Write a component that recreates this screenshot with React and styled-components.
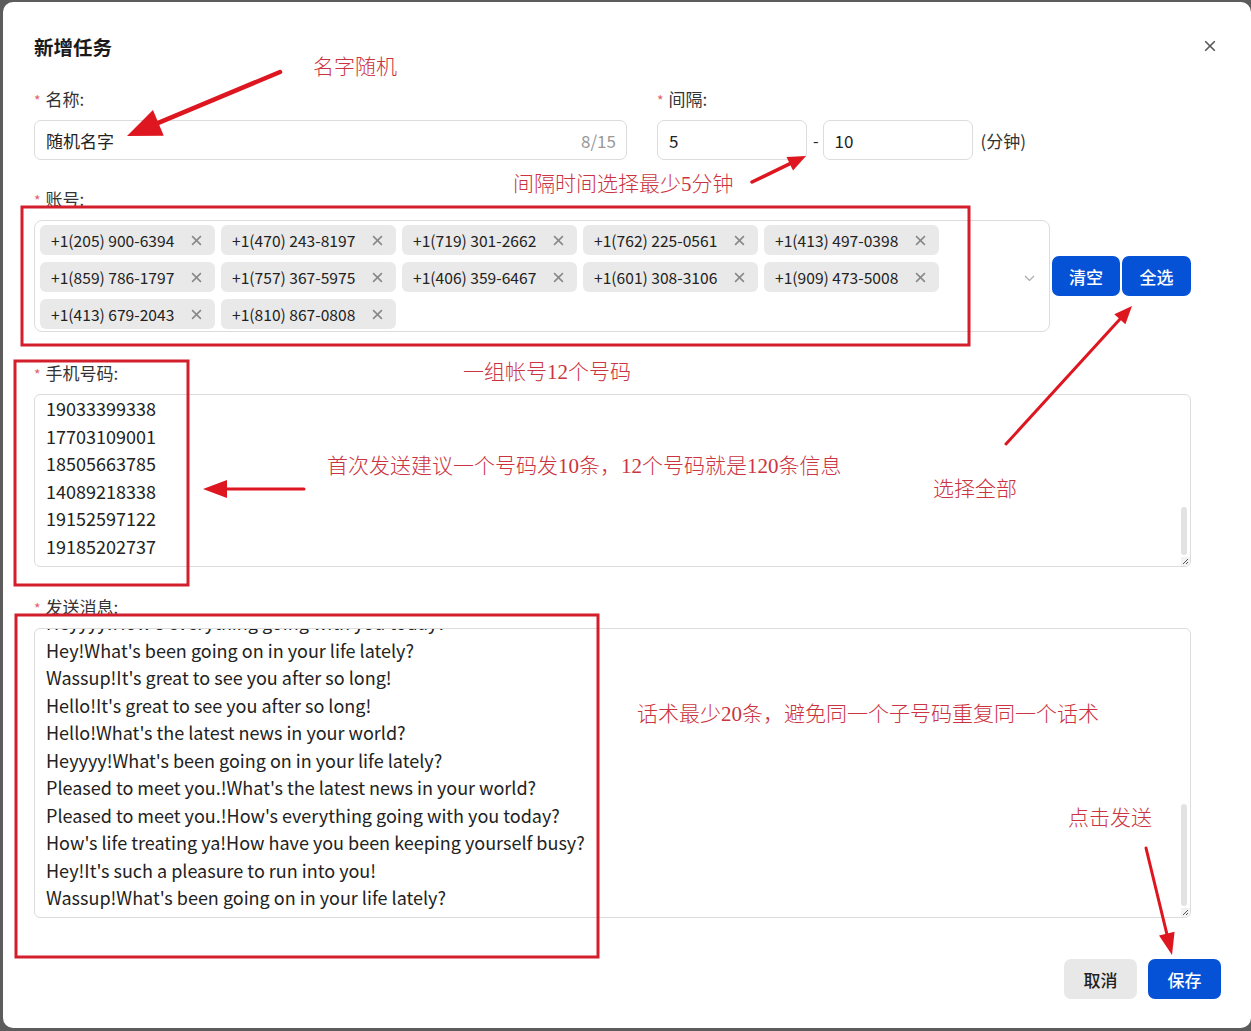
import React from 'react'
import styled, { createGlobalStyle } from 'styled-components'

const GlobalStyle = createGlobalStyle`
    body{
        margin:0;
        background:#5c5c5c;
        font-family:"Noto Sans CJK SC","Noto Sans",sans-serif;
    }
    *{box-sizing:border-box;}
`

const Page = styled.div`
    position:relative;
    width:1251px;
    height:1031px;
    overflow:hidden;
    padding:2px 0 0 3px;
`

const Modal = styled.div`
    background:#fff;
    border-radius:10px;
    height:1026px;
    padding:31px 60px 0 31px;
    display:flex;
    flex-direction:column;
    color:#222;
`

const Header = styled.div`
    display:flex;
    justify-content:space-between;
    align-items:center;
    height:26px;
    margin-right:-30px;
`

const Title = styled.div`
    font-size:19.5px;
    font-weight:700;
    color:#1a1a1a;
`

const CloseBtn = styled.div`
    width:20px;
    height:20px;
    display:flex;
    align-items:center;
    justify-content:center;
    margin-right:1px;
`

const Section = styled.div`
    margin-top:${p => p.$top}px;
`

const Row = styled.div`
    display:flex;
    gap:30px;
`

const Field = styled.div`
    display:flex;
    flex-direction:column;
    width:${p => p.$w ? p.$w + 'px' : 'auto'};
`

const Label = styled.div`
    font-size:17px;
    line-height:22px;
    height:22px;
    margin-bottom:10px;
    color:#333;
`

const Star = styled.span`
    color:#e3606b;
    font-size:14px;
    margin-right:5px;
`

const InputBox = styled.div`
    height:40px;
    width:${p => p.$w ? p.$w + 'px' : '100%'};
    border:1px solid #dcdcdc;
    border-radius:7px;
    padding:0 10px 0 11px;
    display:flex;
    align-items:center;
    justify-content:space-between;
    font-size:17px;
    color:#222;
`

const Counter = styled.span`
    color:#999;
    font-size:17px;
`

const RangeRow = styled.div`
    display:flex;
    align-items:center;
`

const Dash = styled.span`
    margin:0 4px 0 6px;
    font-size:16px;
`

const Unit = styled.span`
    margin-left:8px;
    font-size:17px;
    color:#333;
`

const SelectRow = styled.div`
    display:flex;
    align-items:center;
    gap:2px;
`

const Select = styled.div`
    width:1017px;
    height:112px;
    border:1px solid #dcdcdc;
    border-radius:8px;
    padding:4px 0 0 5px;
    display:flex;
    align-items:center;
`

const TagList = styled.div`
    align-self:flex-start;
    width:906px;
    display:flex;
    flex-wrap:wrap;
    gap:7px 6px;
`

const Tag = styled.div`
    width:175px;
    height:30px;
    background:#e9e9e9;
    border-radius:6px;
    display:flex;
    align-items:center;
    justify-content:space-between;
    padding:0 13px 0 11px;
    font-size:15.6px;
    color:#222;
`

const Chevron = styled.div`
    margin-left:auto;
    margin-right:14px;
    display:flex;
`

const BlueBtn = styled.div`
    width:${p => p.$w}px;
    height:40px;
    background:#0652d6;
    color:#fff;
    border-radius:7px;
    display:flex;
    align-items:center;
    justify-content:center;
    font-size:17px;
    font-weight:500;
`

const GrayBtn = styled(BlueBtn)`
    background:#e8e8e8;
    color:#222;
`

const Memo = styled.div`
    position:relative;
    height:${p => p.$h}px;
    border:1px solid #dcdcdc;
    border-radius:6px;
    padding:0 11px;
    overflow:hidden;
    font-size:18px;
    line-height:27.5px;
    color:#222;
`

const MemoText = styled.div`
    margin-top:${p => p.$shift}px;
    white-space:pre;
`

const Thumb = styled.div`
    position:absolute;
    right:3px;
    top:${p => p.$top}px;
    width:6px;
    height:${p => p.$h}px;
    background:#e2e2e2;
    border-radius:3px;
`

const Grip = styled.div`
    position:absolute;
    right:0;
    bottom:0;
    width:9px;
    height:9px;
    display:flex;
`

const Footer = styled.div`
    margin-top:41px;
    margin-right:-30px;
    display:flex;
    justify-content:flex-end;
    gap:11px;
`

const Overlay = styled.svg`
    position:absolute;
    left:0;
    top:0;
    pointer-events:none;
`

const Note = styled.div`
    position:absolute;
    left:${p => p.$x}px;
    top:${p => p.$y}px;
    font-family:"Liberation Serif","Noto Sans CJK SC",serif;
    font-size:21px;
    line-height:28px;
    color:#cc3340;
    white-space:nowrap;
    font-weight:300;
`

const XIcon = ({ size = 11, color = '#888', w = 1.4 }) => (
    <svg width={size} height={size} viewBox="0 0 10 10">
        <path d="M1 1L9 9M9 1L1 9" stroke={color} strokeWidth={w} fill="none" />
    </svg>
)

function Arrow({ x1, y1, x2, y2, len, wid, w = 4 }) {
    const dx = x2 - x1, dy = y2 - y1
    const d = Math.hypot(dx, dy)
    const ux = dx / d, uy = dy / d
    const bx = x2 - ux * len, by = y2 - uy * len
    const px = -uy * wid / 2, py = ux * wid / 2
    return (
        <g>
            <line x1={x1} y1={y1} x2={bx + ux * 2} y2={by + uy * 2} stroke="#de1620" strokeWidth={w} strokeLinecap="round" />
            <polygon points={`${x2},${y2} ${bx + px},${by + py} ${bx - px},${by - py}`} fill="#de1620" />
        </g>
    )
}

const accounts = [
    '+1(205) 900-6394', '+1(470) 243-8197', '+1(719) 301-2662', '+1(762) 225-0561', '+1(413) 497-0398',
    '+1(859) 786-1797', '+1(757) 367-5975', '+1(406) 359-6467', '+1(601) 308-3106', '+1(909) 473-5008',
    '+1(413) 679-2043', '+1(810) 867-0808',
]

const phones = ['19033399338', '17703109001', '18505663785', '14089218338', '19152597122', '19185202737']

const messages = [
    'Heyyyy!How\'s everything going with you today?',
    'Hey!What\'s been going on in your life lately?',
    'Wassup!It\'s great to see you after so long!',
    'Hello!It\'s great to see you after so long!',
    'Hello!What\'s the latest news in your world?',
    'Heyyyy!What\'s been going on in your life lately?',
    'Pleased to meet you.!What\'s the latest news in your world?',
    'Pleased to meet you.!How\'s everything going with you today?',
    'How\'s life treating ya!How have you been keeping yourself busy?',
    'Hey!It\'s such a pleasure to run into you!',
    'Wassup!What\'s been going on in your life lately?',
]

const GripIcon = () => (
    <svg width="9" height="9" viewBox="0 0 9 9">
        <rect x="0" y="0" width="9" height="9" fill="#f2f2f2" />
        <path d="M2 7L7 2M5 7L7 5" stroke="#555" strokeWidth="1" />
    </svg>
)

export default function App() {
    return (
        <Page>
            <GlobalStyle />
            <Modal>
                <Header>
                    <Title>新增任务</Title>
                    <CloseBtn><XIcon size={12} color="#555" w={1.3} /></CloseBtn>
                </Header>

                <Section $top={29}>
                    <Row>
                        <Field $w={593}>
                            <Label><Star>*</Star>名称:</Label>
                            <InputBox>
                                <span>随机名字</span>
                                <Counter>8/15</Counter>
                            </InputBox>
                        </Field>
                        <Field>
                            <Label><Star>*</Star>间隔:</Label>
                            <RangeRow>
                                <InputBox $w={150}>5</InputBox>
                                <Dash>-</Dash>
                                <InputBox $w={150}>10</InputBox>
                                <Unit>(分钟)</Unit>
                            </RangeRow>
                        </Field>
                    </Row>
                </Section>

                <Section $top={28}>
                    <Label><Star>*</Star>账号:</Label>
                    <SelectRow>
                        <Select>
                            <TagList>
                                {accounts.map(a => (
                                    <Tag key={a}>
                                        <span>{a}</span>
                                        <XIcon />
                                    </Tag>
                                ))}
                            </TagList>
                            <Chevron>
                                <svg width="11" height="7" viewBox="0 0 11 7">
                                    <path d="M1 1L5.5 5.5L10 1" stroke="#aaa" strokeWidth="1.2" fill="none" />
                                </svg>
                            </Chevron>
                        </Select>
                        <BlueBtn $w={68}>清空</BlueBtn>
                        <BlueBtn $w={69}>全选</BlueBtn>
                    </SelectRow>
                </Section>

                <Section $top={30}>
                    <Label><Star>*</Star>手机号码:</Label>
                    <Memo $h={173}>
                        <MemoText $shift={0}>{phones.join('\n')}</MemoText>
                        <Thumb $top={112} $h={48} />
                        <Grip><GripIcon /></Grip>
                    </Memo>
                </Section>

                <Section $top={29}>
                    <Label><Star>*</Star>发送消息:</Label>
                    <Memo $h={290}>
                        <MemoText $shift={-20}>{messages.join('\n')}</MemoText>
                        <Thumb $top={175} $h={102} />
                        <Grip><GripIcon /></Grip>
                    </Memo>
                </Section>

                <Footer>
                    <GrayBtn $w={73}>取消</GrayBtn>
                    <BlueBtn $w={73}>保存</BlueBtn>
                </Footer>
            </Modal>

            <Overlay width="1251" height="1031" viewBox="0 0 1251 1031">
                <rect x="22" y="207" width="947" height="138" fill="none" stroke="#d21f2b" strokeWidth="3" />
                <rect x="15" y="361" width="173" height="224" fill="none" stroke="#d21f2b" strokeWidth="3" />
                <rect x="16" y="615" width="582" height="342" fill="none" stroke="#d21f2b" strokeWidth="3" />
                <Arrow x1={280} y1={72} x2={127} y2={136} len={34} wid={28} w={4.5} />
                <Arrow x1={752} y1={182} x2={806} y2={156} len={18} wid={15} w={3.5} />
                <Arrow x1={304} y1={489} x2={203} y2={489} len={24} wid={18} w={3} />
                <Arrow x1={1006} y1={444} x2={1132} y2={306} len={18} wid={15} w={3} />
                <Arrow x1={1146} y1={848} x2={1172} y2={955} len={22} wid={16} w={3} />
            </Overlay>

            <Note $x={313} $y={53}>名字随机</Note>
            <Note $x={513} $y={170}>间隔时间选择最少5分钟</Note>
            <Note $x={463} $y={358}>一组帐号12个号码</Note>
            <Note $x={327} $y={452}>首次发送建议一个号码发10条，12个号码就是120条信息</Note>
            <Note $x={933} $y={475}>选择全部</Note>
            <Note $x={637} $y={700}>话术最少20条，避免同一个子号码重复同一个话术</Note>
            <Note $x={1068} $y={804}>点击发送</Note>
        </Page>
    )
}
